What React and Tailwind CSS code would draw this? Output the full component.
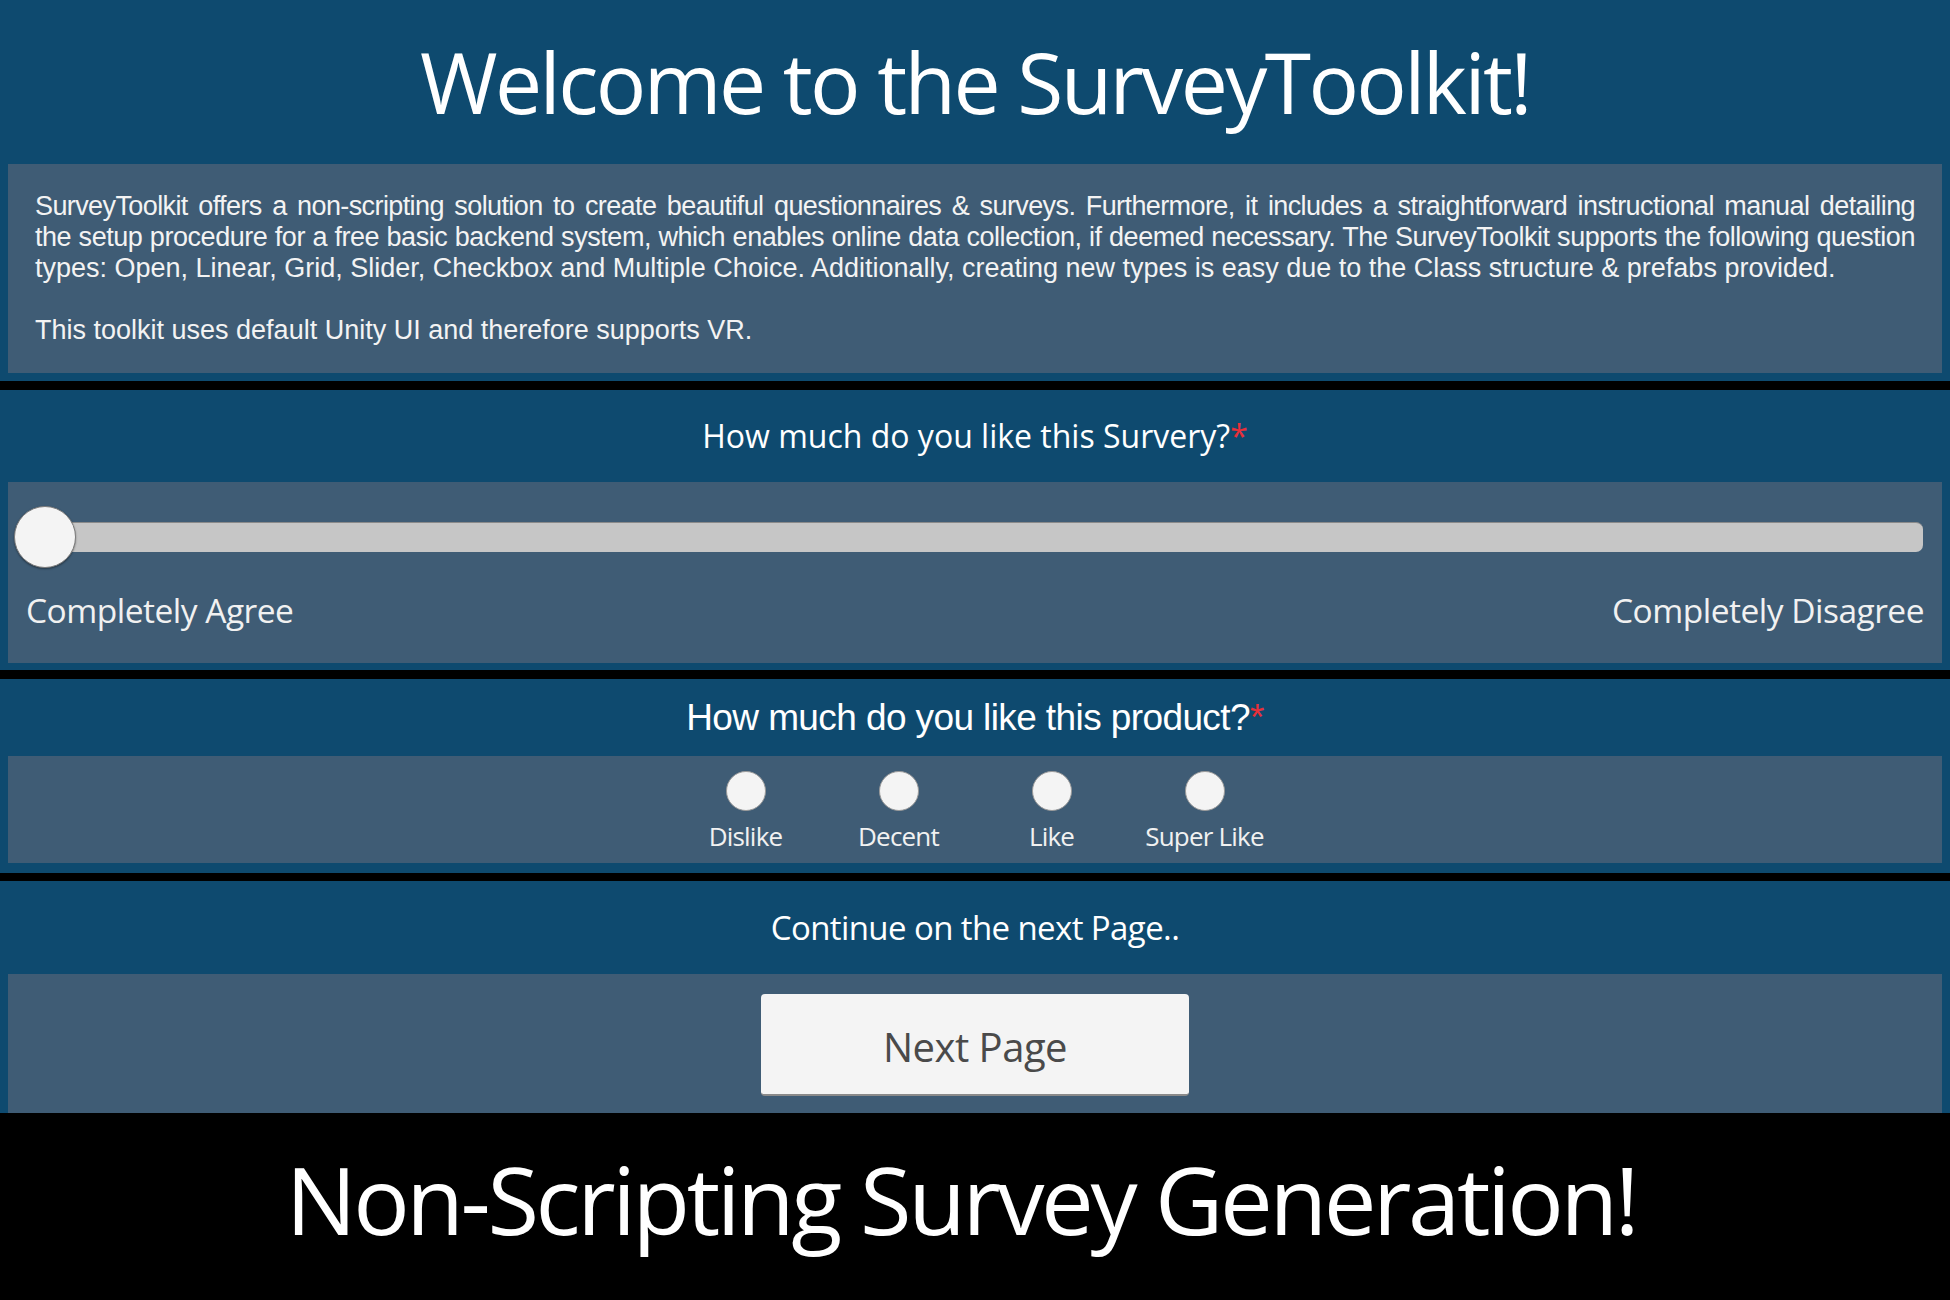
const Band = () => (
    <div className="h-[9px] bg-black" />
);

const App = () => {
    const options = ['Dislike', 'Decent', 'Like', 'Super Like'];

    return (
        <div className="w-[1950px] h-[1300px] bg-[#0e4a6f] flex flex-col overflow-hidden">
            {/* intro */}
            <div className="h-[164px] flex items-center justify-center">
                <h1 className="text-white text-[84px] leading-none tracking-[-2.6px] font-['Open_Sans',sans-serif]">
                    Welcome to the SurveyToolkit!
                </h1>
            </div>
            <div className="mx-[8px] h-[209px] bg-[#3f5c75] px-[27px] pt-[27px] text-[#f3f3f3] text-[27px] leading-[31px] font-['Liberation_Sans',Arial,sans-serif]">
                <p className="whitespace-nowrap tracking-[-0.6px] [text-align-last:justify]">
                    SurveyToolkit offers a non-scripting solution to create beautiful questionnaires &amp; surveys. Furthermore, it includes a straightforward instructional manual detailing
                </p>
                <p className="whitespace-nowrap tracking-[-0.45px] [text-align-last:justify]">
                    the setup procedure for a free basic backend system, which enables online data collection, if deemed necessary. The SurveyToolkit supports the following question
                </p>
                <p className="whitespace-nowrap">
                    types: Open, Linear, Grid, Slider, Checkbox and Multiple Choice. Additionally, creating new types is easy due to the Class structure &amp; prefabs provided.
                </p>
                <p className="whitespace-nowrap mt-[31px]">This toolkit uses default Unity UI and therefore supports VR.</p>
            </div>
            <div className="h-[8px]" />
            <Band />

            {/* slider question */}
            <div className="h-[92px] flex items-center justify-center">
                <p className="text-white text-[32px] font-['Open_Sans',sans-serif]">
                    How much do you like this Survery?<span className="text-[#e8303a]">*</span>
                </p>
            </div>
            <div className="mx-[8px] h-[181px] bg-[#3f5c75] px-[6px] pt-[24px] flex flex-col">
                <div className="relative h-[62px] flex items-center">
                    <div className="ml-[20px] mr-[13px] flex-1 h-[30px] bg-[#c6c6c6] border-t border-[#8a8a8a] rounded-r-[7px]" />
                    <div className="absolute left-0 top-0 w-[62px] h-[62px] rounded-full bg-[#f4f4f4] border border-[#7b7b7b] shadow-[0_1px_2px_rgba(0,0,0,0.4)]" />
                </div>
                <div className="mt-[26px] px-[12px] flex justify-between text-[33.5px] leading-none text-[#f1f1f1] font-['Open_Sans',sans-serif] tracking-[-0.5px]">
                    <span>Completely Agree</span>
                    <span>Completely Disagree</span>
                </div>
            </div>
            <div className="h-[7px]" />
            <Band />

            {/* radio question */}
            <div className="h-[77px] flex items-center justify-center">
                <p className="text-white text-[37px] font-['Liberation_Sans',Arial,sans-serif] tracking-[-0.6px]">
                    How much do you like this product?<span className="text-[#e8303a]">*</span>
                </p>
            </div>
            <div className="mx-[8px] h-[107px] bg-[#3f5c75] flex justify-center pt-[15px]">
                {options.map((o) => (
                    <div key={o} className="w-[153px] flex flex-col items-center">
                        <div className="w-[40px] h-[40px] rounded-full bg-[#f4f4f4] border border-[#9a9a9a]" />
                        <span className="mt-[12px] text-[26px] leading-none text-[#f1f1f1] font-['Open_Sans',sans-serif] tracking-[-0.8px]">
                            {o}
                        </span>
                    </div>
                ))}
            </div>
            <div className="h-[10px]" />
            <div className="h-[8px] bg-black" />

            {/* next page */}
            <div className="h-[93px] flex items-center justify-center">
                <p className="text-white text-[33px] font-['Open_Sans',sans-serif] tracking-[-0.6px]">Continue on the next Page..</p>
            </div>
            <div className="mx-[8px] h-[139px] bg-[#3f5c75] flex justify-center pt-[20px]">
                <button className="w-[428px] h-[102px] pt-[6px] bg-[#f4f4f4] rounded-[4px] border-b-2 border-[#8a8a8a] text-[#4a4a4a] text-[40px] font-['Open_Sans',sans-serif] tracking-[-0.5px]">
                    Next Page
                </button>
            </div>

            {/* banner */}
            <div className="flex-1 bg-black flex items-center justify-center pr-[28px] pb-[16px]">
                <p className="text-white text-[94px] leading-none tracking-[-3.4px] font-['Open_Sans',sans-serif]">
                    Non-Scripting Survey Generation!
                </p>
            </div>
        </div>
    );
};

export default App;
